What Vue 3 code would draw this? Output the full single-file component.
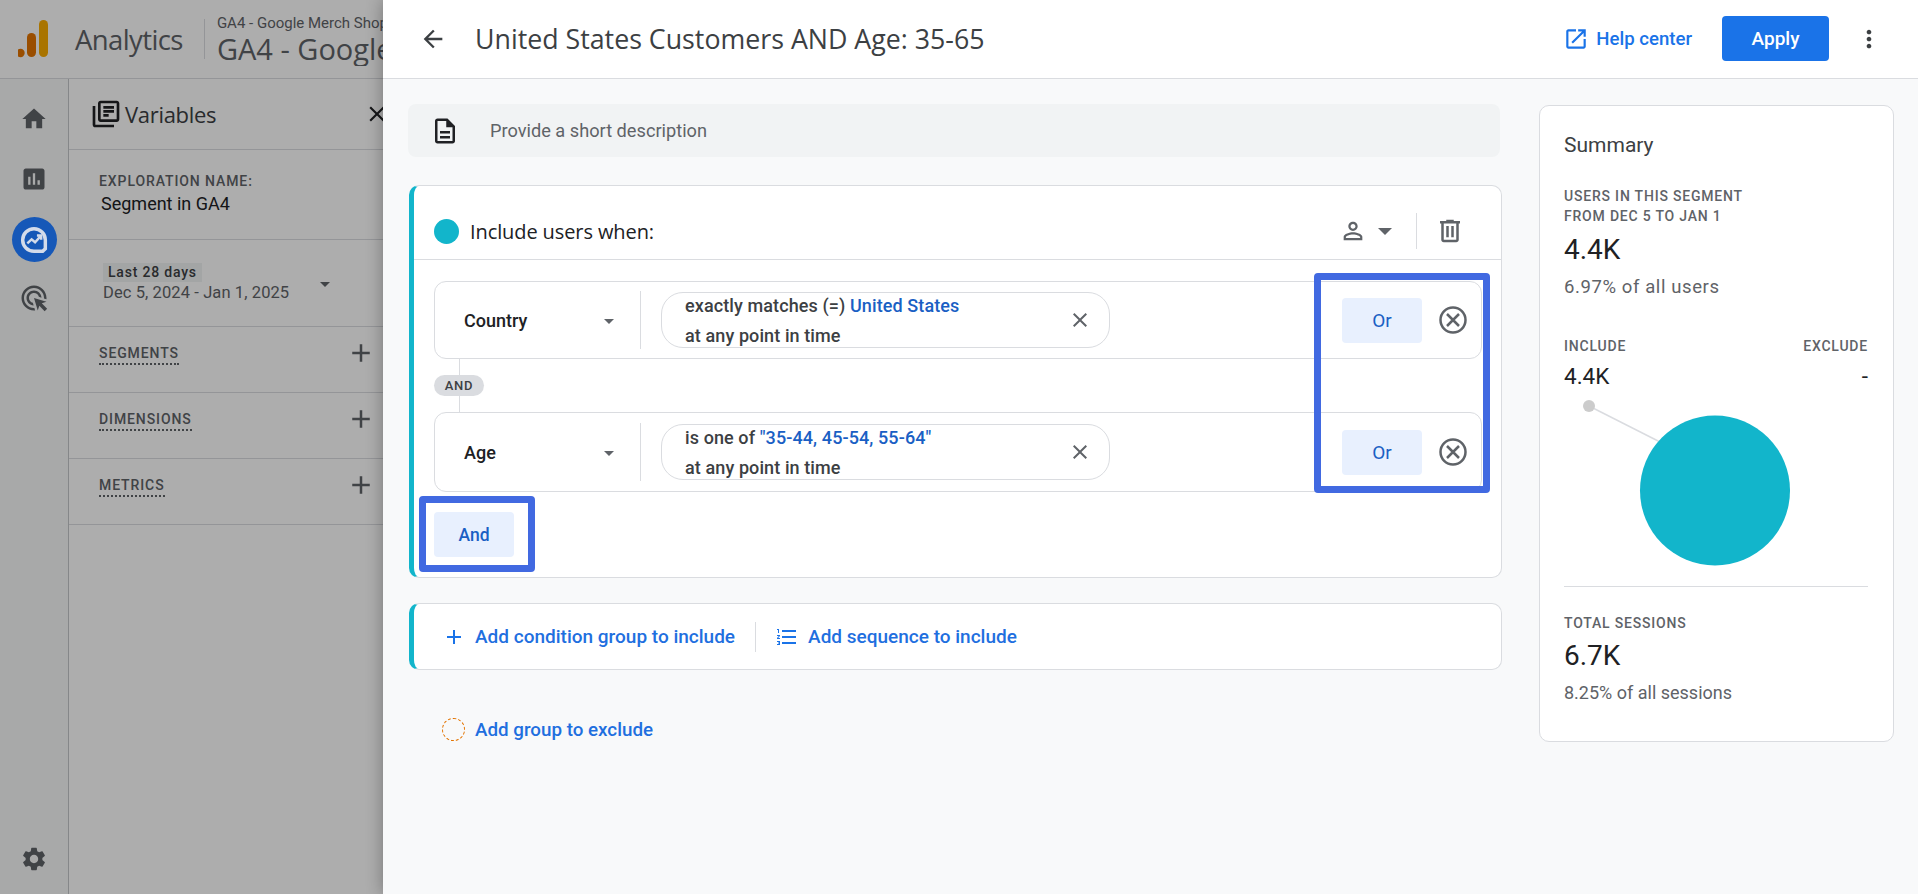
<script setup>
const icons = {
  home: 'M10 20v-6h4v6h5v-8h3L12 3 2 12h3v8z',
  chart: 'M19 3H5c-1.1 0-2 .9-2 2v14c0 1.1.9 2 2 2h14c1.1 0 2-.9 2-2V5c0-1.1-.9-2-2-2zM9 17H7v-7h2v7zm4 0h-2V7h2v10zm4 0h-2v-4h2v4z',
  target: 'M11.71 17.99C8.53 17.84 6 15.22 6 12c0-3.31 2.69-6 6-6 3.22 0 5.84 2.53 5.99 5.71l-2.1-.63C15.48 9.31 13.89 8 12 8c-2.21 0-4 1.79-4 4 0 1.89 1.31 3.48 3.08 3.89l.63 2.1zM22 12c0 .3-.01.6-.04.9l-1.97-.59c.01-.1.01-.21.01-.31 0-4.42-3.58-8-8-8s-8 3.58-8 8 3.58 8 8 8c.1 0 .21 0 .31-.01l.59 1.97c-.3.03-.6.04-.9.04-5.52 0-10-4.48-10-10S6.48 2 12 2s10 4.48 10 10zm-3.77 4.26L22 15l-10-3 3 10 1.26-3.77 4.27 4.27 1.98-1.98-4.28-4.26z',
  gear: 'M19.14 12.94c.04-.3.06-.61.06-.94 0-.32-.02-.64-.07-.94l2.03-1.58c.18-.14.23-.41.12-.61l-1.92-3.32c-.12-.22-.37-.29-.59-.22l-2.39.96c-.5-.38-1.03-.7-1.62-.94l-.36-2.54c-.04-.24-.24-.41-.48-.41h-3.84c-.24 0-.43.17-.47.41l-.36 2.54c-.59.24-1.13.57-1.62.94l-2.39-.96c-.22-.08-.47 0-.59.22L2.74 8.87c-.12.21-.08.47.12.61l2.03 1.58c-.05.3-.09.63-.09.94s.02.64.07.94l-2.03 1.58c-.18.14-.23.41-.12.61l1.92 3.32c.12.22.37.29.59.22l2.39-.96c.5.38 1.03.7 1.62.94l.36 2.54c.05.24.24.41.48.41h3.84c.24 0 .44-.17.47-.41l.36-2.54c.59-.24 1.13-.56 1.62-.94l2.39.96c.22.08.47 0 .59-.22l1.92-3.32c.12-.22.07-.47-.12-.61l-2.01-1.58zM12 15.6c-1.98 0-3.6-1.62-3.6-3.6s1.62-3.6 3.6-3.6 3.6 1.62 3.6 3.6-1.62 3.6-3.6 3.6z',
  library: 'M4 6H2v14c0 1.1.9 2 2 2h14v-2H4V6zm16-4H8c-1.1 0-2 .9-2 2v12c0 1.1.9 2 2 2h12c1.1 0 2-.9 2-2V4c0-1.1-.9-2-2-2zm0 14H8V4h12v12zM10 9h8v2h-8zm0 3h4v2h-4zm0-6h8v2h-8z',
  doc: 'M8 16h8v2H8zm0-4h8v2H8zm6-10H6c-1.1 0-2 .9-2 2v16c0 1.1.89 2 1.99 2H18c1.1 0 2-.9 2-2V8l-6-6zm4 18H6V4h7v5h5v11z',
  back: 'M20 11H7.83l5.59-5.59L12 4l-8 8 8 8 1.41-1.41L7.83 13H20v-2z',
  open: 'M19 19H5V5h7V3H5c-1.11 0-2 .9-2 2v14c0 1.1.89 2 2 2h14c1.1 0 2-.9 2-2v-7h-2v7zM14 3v2h3.59l-9.83 9.83 1.41 1.41L19 6.41V10h2V3h-7z',
  more: 'M12 8c1.1 0 2-.9 2-2s-.9-2-2-2-2 .9-2 2 .9 2 2 2zm0 2c-1.1 0-2 .9-2 2s.9 2 2 2 2-.9 2-2-.9-2-2-2zm0 6c-1.1 0-2 .9-2 2s.9 2 2 2 2-.9 2-2-.9-2-2-2z',
  person: 'M12 5.9c1.16 0 2.1.94 2.1 2.1s-.94 2.1-2.1 2.1S9.9 9.16 9.9 8s.94-2.1 2.1-2.1m0 9c2.97 0 6.1 1.46 6.1 2.1v1.1H5.9V17c0-.64 3.13-2.1 6.1-2.1M12 4C9.79 4 8 5.79 8 8s1.79 4 4 4 4-1.79 4-4-1.79-4-4-4zm0 9c-2.67 0-8 1.34-8 4v3h16v-3c0-2.66-5.33-4-8-4z',
  trash: 'M15 4V3H9v1H4v2h1v13c0 1.1.9 2 2 2h10c1.1 0 2-.9 2-2V6h1V4h-5zm2 15H7V6h10v13zM9 8h2v9H9zm4 0h2v9h-2z',
  close: 'M19 6.41L17.59 5 12 10.59 6.41 5 5 6.41 10.59 12 5 17.59 6.41 19 12 13.41 17.59 19 19 17.59 13.41 12 19 6.41z',
  add: 'M19 13h-6v6h-2v-6H5v-2h6V5h2v6h6v2z',
  list: 'M2 17h2v.5H3v1h1v.5H2v1h3v-4H2v1zm1-9h1V4H2v1h1v3zm-1 3h1.8L2 13.1v.9h3v-1H3.2L5 10.9V10H2v1zm5-6v2h14V5H7zm0 14h14v-2H7v2zm0-6h14v-2H7v2z',
}
const sections = ['SEGMENTS', 'DIMENSIONS', 'METRICS']
const conditions = [
  { field: 'Country', pre: 'exactly matches (=) ', value: 'United States', h: 'row-a' },
  { field: 'Age', pre: 'is one of ', value: '"35-44, 45-54, 55-64"', h: 'row-b' },
]
</script>

<template>
  <div class="root">
    <div class="page">
      <header class="topbar">
        <svg class="logo" viewBox="0 0 36 40" width="36" height="40">
          <rect x="21" y="0" width="9" height="37" rx="4.5" fill="#f9ab00" />
          <rect x="9" y="13" width="9" height="24" rx="4.5" fill="#e37400" />
          <circle cx="2.5" cy="33" r="4.2" fill="#e37400" />
        </svg>
        <span class="brand">Analytics</span>
        <span class="top-div"></span>
        <div class="acct">
          <div class="acct-s">GA4 - Google Merch Shop</div>
          <div class="acct-l">GA4 - Google Merch Shop</div>
        </div>
      </header>
      <div class="under">
        <nav class="rail">
          <svg class="rail-i r1" viewBox="0 0 24 24"><path :d="icons.home" /></svg>
          <svg class="rail-i r2" viewBox="0 0 24 24"><path :d="icons.chart" /></svg>
          <div class="rail-active">
            <svg viewBox="0 0 24 24" width="32" height="32" fill="none" stroke="#d3dbea">
              <path d="M20.5 12a8.5 8.5 0 1 0-8.5 8.5h6.5l2-2z" stroke-width="2.6" />
              <path d="M7 14.5l3.2-3 2.6 2.2 4.2-4.6M14.2 8.6h3.2v3.2" stroke-width="1.8" />
            </svg>
          </div>
          <svg class="rail-i r4" viewBox="0 0 24 24"><path :d="icons.target" /></svg>
          <svg class="rail-i r5" viewBox="0 0 24 24"><path :d="icons.gear" /></svg>
        </nav>
        <aside class="vars">
          <div class="vars-head">
            <svg class="vars-ic" viewBox="0 0 24 24"><path :d="icons.library" /></svg>
            <span class="vars-title">Variables</span>
            <svg class="vars-x" viewBox="0 0 24 24"><path :d="icons.close" /></svg>
          </div>
          <div class="vars-name">
            <div class="cap">EXPLORATION NAME:</div>
            <div class="name-v">Segment in GA4</div>
          </div>
          <div class="vars-date">
            <div>
              <span class="date-chip">Last 28 days</span>
              <div class="date-v">Dec 5, 2024 - Jan 1, 2025</div>
            </div>
            <span class="caret date-caret"></span>
          </div>
          <div v-for="s in sections" :key="s" class="vars-row">
            <span class="cap dotted">{{ s }}</span>
            <svg class="vars-plus" viewBox="0 0 24 24"><path :d="icons.add" /></svg>
          </div>
        </aside>
      </div>
    </div>

    <div class="scrim"></div>

    <section class="drawer">
      <header class="d-head">
        <svg class="d-back" viewBox="0 0 24 24"><path :d="icons.back" /></svg>
        <h1 class="d-title">United States Customers AND Age: 35-65</h1>
        <svg class="d-open" viewBox="0 0 24 24"><path :d="icons.open" /></svg>
        <span class="d-help">Help center</span>
        <button class="d-apply">Apply</button>
        <svg class="d-more" viewBox="0 0 24 24"><path :d="icons.more" /></svg>
      </header>
      <div class="d-body">
        <div class="d-main">
          <div class="desc">
            <svg class="desc-i" viewBox="0 0 24 24"><path :d="icons.doc" /></svg>
            <span>Provide a short description</span>
          </div>

          <div class="card">
            <div class="card-head">
              <span class="dot"></span>
              <span class="inc">Include users when:</span>
              <svg class="person" viewBox="0 0 24 24"><path :d="icons.person" /></svg>
              <span class="caret person-caret"></span>
              <span class="head-div"></span>
              <svg class="trash" viewBox="0 0 24 24"><path :d="icons.trash" /></svg>
            </div>
            <div class="card-body">
              <template v-for="(c, i) in conditions" :key="c.field">
                <div class="cond" :class="c.h">
                  <div class="field">
                    <span>{{ c.field }}</span>
                    <span class="caret field-caret"></span>
                  </div>
                  <span class="v-div"></span>
                  <div class="pill">
                    <div class="pill-text">
                      <div>{{ c.pre }}<span class="val">{{ c.value }}</span></div>
                      <div>at any point in time</div>
                    </div>
                    <svg class="pill-x" viewBox="0 0 24 24"><path :d="icons.close" /></svg>
                  </div>
                  <button class="soft or">Or</button>
                  <svg class="off" viewBox="0 0 24 24" fill="none" stroke="#5f6368" stroke-width="2">
                    <circle cx="12" cy="12" r="10" />
                    <path d="M7.2 7.2l9.6 9.6M16.8 7.2l-9.6 9.6" />
                  </svg>
                </div>
                <div v-if="i === 0" class="join"><span class="chip">AND</span></div>
              </template>
              <button class="soft and">And</button>
            </div>
            <div class="mark mark-or"></div>
            <div class="mark mark-and"></div>
          </div>

          <div class="addcard">
            <svg class="add-i" viewBox="0 0 24 24"><path :d="icons.add" /></svg>
            <span class="link">Add condition group to include</span>
            <span class="add-div"></span>
            <svg class="add-l" viewBox="0 0 24 24"><path :d="icons.list" /></svg>
            <span class="link">Add sequence to include</span>
          </div>

          <div class="exclude">
            <span class="dashed"></span>
            <span class="link">Add group to exclude</span>
          </div>
        </div>

        <aside class="summary">
          <div class="sum-title">Summary</div>
          <div class="lab two">USERS IN THIS SEGMENT<br />FROM DEC 5 TO JAN 1</div>
          <div class="big first">4.4K</div>
          <div class="sub sub1">6.97% of all users</div>
          <div class="inc-exc lab"><span>INCLUDE</span><span>EXCLUDE</span></div>
          <div class="inc-exc mid"><span>4.4K</span><span>-</span></div>
          <svg class="pie" viewBox="0 0 304 188" width="304" height="188">
            <line x1="25" y1="8" x2="100" y2="46" stroke="#dadce0" stroke-width="1.5" />
            <circle cx="25" cy="8" r="6" fill="#ccc" />
            <circle cx="151" cy="92.5" r="75" fill="#12b5cb" />
          </svg>
          <div class="sum-div"></div>
          <div class="lab total">TOTAL SESSIONS</div>
          <div class="big second">6.7K</div>
          <div class="sub sub2">8.25% of all sessions</div>
        </aside>
      </div>
    </section>
  </div>
</template>

<style>
html, body { margin: 0; padding: 0; background: #f8f9fa; }
</style>

<style scoped>
.root {
  position: relative;
  width: 1918px;
  height: 894px;
  overflow: hidden;
  font-family: Roboto, "Liberation Sans", sans-serif;
  color: #202124;
}
.page { width: 1918px; height: 894px; background: #fff; }
.topbar {
  height: 78px;
  border-bottom: 1px solid #dadce0;
  display: flex;
  align-items: center;
  box-sizing: content-box;
  white-space: nowrap;
}
.logo { margin-left: 18px; margin-top: 2px; flex: none; }
.brand { margin-left: 21px; font: 400 27.5px "Open Sans", sans-serif; letter-spacing: -0.6px; color: #5f6368; }
.top-div { width: 1px; height: 40px; background: #dadce0; margin-left: 21px; }
.acct { margin-left: 12px; padding-top: 2px; width: 167px; overflow: hidden; flex: none; }
.acct-s { font-size: 15px; line-height: 18px; color: #5f6368; width: 167px; overflow: hidden; }
.acct-l { font: 400 29px/34px "Open Sans", sans-serif; color: #5f6368; width: 167px; overflow: hidden; }
.under { display: flex; height: 815px; }
.rail {
  width: 68px;
  border-right: 1px solid #c4c7cb;
  background: #f8f9fa;
  display: flex;
  flex-direction: column;
  align-items: center;
  flex: none;
}
.rail-i { width: 28px; height: 28px; fill: #5f6368; flex: none; }
.r1 { margin-top: 26px; }
.r2 { margin-top: 32px; }
.r4 { width: 30px; height: 30px; margin-top: 21px; }
.r5 { margin-top: 532px; }
.rail-active {
  position: relative;
  z-index: 1;
  width: 45px; height: 45px; border-radius: 50%;
  background: #1658b8;
  margin-top: 24px;
  display: flex; align-items: center; justify-content: center;
  flex: none;
}
.vars { width: 315px; flex: none; }
.vars-head {
  height: 70px;
  border-bottom: 1px solid #dadce0;
  display: flex;
  align-items: center;
  padding-left: 21px;
}
.vars-ic { width: 32px; height: 32px; fill: #202124; flex: none; }
.vars-title { margin-left: 3px; font: 400 22px "Open Sans", sans-serif; letter-spacing: -0.3px; color: #3c4043; }
.vars-x { width: 26px; height: 26px; fill: #202124; margin-left: 148px; flex: none; }
.cap { font-size: 14px; font-weight: 500; letter-spacing: 0.9px; color: #5f6368; line-height: 16px; }
.vars-name {
  height: 90px; box-sizing: border-box;
  border-bottom: 1px solid #dadce0;
  padding: 23px 0 0 30px;
}
.name-v { font-size: 18px; line-height: 24px; margin: 3px 0 0 2px; color: #202124; }
.vars-date {
  height: 87px; box-sizing: border-box;
  border-bottom: 1px solid #dadce0;
  padding: 22px 0 0 34px;
  display: flex;
  position: relative;
}
.date-chip { display: inline-block; font-size: 14px; font-weight: 500; letter-spacing: .8px; line-height: 19px; padding: 0 5px; background: #f1f3f4; color: #3c4043; }
.date-v { font-size: 16.5px; line-height: 21px; letter-spacing: .1px; color: #5f6368; }
.date-caret { position: absolute; left: 251px; top: 42px; margin: 0; }
.vars-row {
  height: 66px; box-sizing: border-box;
  border-bottom: 1px solid #dadce0;
  padding: 18px 8px 0 30px;
  display: flex;
  justify-content: space-between;
  align-items: flex-start;
}
.dotted { border-bottom: 2px dotted #5f6368; padding-bottom: 2px; }
.vars-plus { width: 30px; height: 30px; fill: #5f6368; margin-top: -7px; }

.scrim { position: absolute; inset: 0; background: rgba(0,0,0,.32); }

.caret { width: 0; height: 0; border-left: 5px solid transparent; border-right: 5px solid transparent; border-top: 5px solid #5f6368; display: inline-block; }

.drawer {
  position: absolute;
  z-index: 2;
  left: 383px; top: 0;
  width: 1535px; height: 894px;
  background: #f8f9fa;
  box-shadow: 0 0 16px rgba(0,0,0,.32);
}
.d-head {
  height: 78px;
  background: #fff;
  border-bottom: 1px solid #dadce0;
  display: flex;
  align-items: center;
}
.d-back { width: 28px; height: 28px; fill: #3c4043; margin-left: 36px; flex: none; }
.d-title { margin: 0 0 2px 28px; font: 400 26.75px "Open Sans", sans-serif; color: #3c4043; flex: 1; white-space: nowrap; }
.d-open { width: 26px; height: 26px; fill: #1a73e8; flex: none; }
.d-help { margin-left: 7px; font-size: 18.6px; font-weight: 500; color: #1a73e8; }
.d-apply {
  margin: 0 0 2px 30px; width: 107px; height: 45px;
  background: #1a73e8; color: #fff; border: 0; border-radius: 4px;
  font: 500 19px Roboto, sans-serif; padding: 0;
}
.d-more { width: 28px; height: 28px; fill: #3c4043; margin: 0 35px 0 26px; flex: none; }
.d-body { display: flex; padding-left: 25px; gap: 37px; align-items: flex-start; }
.d-main { width: 1094px; flex: none; padding-top: 25px; }
.desc {
  height: 53px; border-radius: 8px; background: #f1f3f4;
  margin-right: 2px;
  display: flex; align-items: center; color: #5f6368; font-size: 18.2px;
}
.desc-i { width: 30px; height: 30px; fill: #202124; margin-left: 22px; margin-right: 30px; }
.card {
  position: relative;
  margin: 28px 0 0 1px;
  height: 393px; box-sizing: border-box;
  background: #fff;
  border: 1px solid #dadce0;
  border-left: 5px solid #12b5cb;
  border-radius: 10px;
}
.card-head {
  height: 74px; box-sizing: border-box;
  border-bottom: 1px solid #dadce0;
  display: flex; align-items: center;
  padding: 17px 0 0 20px;
}
.dot { width: 25px; height: 25px; border-radius: 50%; background: #12b5cb; flex: none; }
.inc { margin-left: 11px; font: 500 20px "Open Sans", sans-serif; letter-spacing: -0.1px; color: #202124; flex: 1; }
.person { width: 28px; height: 28px; fill: #5f6368; flex: none; }
.person-caret { margin-left: 11px; border-left-width: 7px; border-right-width: 7px; border-top-width: 7px; }
.head-div { width: 1px; height: 36px; background: #dadce0; margin-left: 24px; }
.trash { width: 30px; height: 30px; fill: #5f6368; margin: 0 36px 0 18px; flex: none; }
.card-body { padding: 21px 19px 0 20px; }
.cond {
  display: flex; align-items: center;
  border: 1px solid #dadce0;
  border-radius: 12px;
  box-sizing: border-box;
}
.row-a { height: 78px; }
.row-b { height: 80px; }
.field {
  width: 205px; box-sizing: border-box;
  padding: 1px 26px 0 29px;
  display: flex; justify-content: space-between; align-items: center;
  font-size: 18px; font-weight: 500; color: #202124;
  flex: none;
}
.field-caret { margin-top: 2px; }
.v-div { width: 1px; height: 58px; background: #dadce0; flex: none; }
.pill {
  margin-left: 20px;
  width: 449px; height: 56px; box-sizing: border-box;
  border: 1.5px solid #dadce0; border-radius: 22px;
  display: flex; align-items: center; flex: none;
  padding-left: 23px;
}
.pill-text { flex: 1; font-size: 18px; font-weight: 500; line-height: 30px; letter-spacing: .1px; color: #3c4043; padding-top: 2px; }
.val { color: #1a5fc4; }
.pill-x { width: 24px; height: 24px; fill: #5f6368; margin-right: 17px; flex: none; }
.soft {
  width: 80px; height: 45px;
  background: #e8f0fe; color: #1a5fc4;
  border: 0; border-radius: 4px; padding: 0;
  font: 500 17.5px Roboto, sans-serif;
  flex: none;
}
.or { margin-left: auto; font-size: 19px; font-weight: 400; }
.off { width: 30px; height: 30px; margin: 0 13px 0 16px; flex: none; }
.join { height: 53px; position: relative; display: flex; align-items: center; }
.join::before { content: ""; position: absolute; left: 25px; top: 0; bottom: 0; width: 1px; background: #dadce0; }
.chip {
  position: relative;
  width: 50px; height: 21px; border-radius: 11px;
  background: #dadce0; color: #3c4043;
  font-size: 13px; font-weight: 500; letter-spacing: .7px;
  display: flex; align-items: center; justify-content: center;
}
.and { display: block; margin-top: 20px; }
.mark { position: absolute; border: 7px solid #4169e1; border-radius: 4px; box-sizing: border-box; pointer-events: none; }
.mark-or { left: 900px; top: 87px; width: 176px; height: 220px; }
.mark-and { left: 5px; top: 310px; width: 116px; height: 76px; }
.addcard {
  margin: 25px 0 0 1px; height: 67px; box-sizing: border-box;
  background: #fff;
  border: 1px solid #dadce0; border-left: 5px solid #12b5cb; border-radius: 10px;
  display: flex; align-items: center;
}
.add-i { width: 24px; height: 24px; fill: #1a73e8; margin-left: 28px; margin-right: 9px; flex: none; }
.link { font-size: 19px; font-weight: 500; color: #1f6fdf; white-space: nowrap; }
.add-div { width: 1px; height: 30px; background: #dadce0; margin: 0 19px 0 20px; }
.add-l { width: 24px; height: 24px; fill: #1a73e8; margin-right: 9px; flex: none; }
.exclude { display: flex; align-items: center; margin: 48px 0 0 34px; }
.exclude .link { font-size: 18.8px; }
.dashed { width: 23px; height: 23px; box-sizing: border-box; border: 1px dashed #e37400; border-radius: 50%; margin-right: 10px; }
.summary {
  width: 355px; height: 637px; box-sizing: border-box;
  margin-top: 26px;
  background: #fff;
  border: 1px solid #dadce0;
  border-radius: 10px;
  padding: 26px 25px 0 24px;
}
.sum-title { font-size: 21px; line-height: 26px; color: #3c4043; }
.lab { font-size: 14px; font-weight: 500; letter-spacing: .8px; line-height: 20px; color: #5f6368; }
.two { margin-top: 28px; }
.big { font-size: 28px; line-height: 32px; color: #202124; }
.first { margin-top: 8px; }
.sub { line-height: 24px; color: #5f6368; margin-top: 9px; }
.sub1 { font-size: 18.5px; letter-spacing: .6px; }
.sub2 { font-size: 18px; }
.inc-exc { display: flex; justify-content: space-between; }
.inc-exc.lab { margin-top: 37px; }
.mid { font-size: 22.5px; line-height: 30px; margin-top: 5px; color: #202124; }
.pie { display: block; margin-top: 7px; }
.sum-div { height: 1px; background: #dadce0; }
.total { margin-top: 26px; }
.second { margin-top: 7px; }
</style>
